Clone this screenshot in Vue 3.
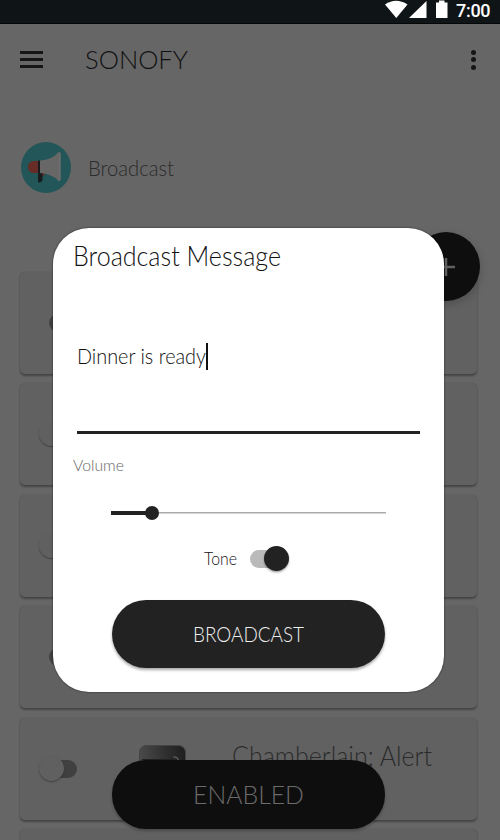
<script setup>
import { h, ref } from 'vue'

const message = ref('Dinner is ready')
const volume = ref(15)
const tone = ref(true)

const devices = [
  { on: true },
  { on: false },
  { on: false },
  { on: true },
  { on: false, name: 'Chamberlain: Alert' },
  { on: false },
]

// A single line of text fitted to a fixed advance width.
const FitText = (props) =>
  h('svg', { width: props.width, height: props.size * 1.3, style: { display: 'block', overflow: 'visible', flex: 'none' } }, [
    h('text', {
      x: 0,
      y: props.size,
      'font-size': props.size,
      fill: 'currentColor',
      textLength: props.width,
      lengthAdjust: 'spacingAndGlyphs',
    }, props.text),
  ])
FitText.props = ['text', 'width', 'size']
</script>

<template>
  <div class="screen">
    <div class="status">
      <svg class="signals" width="70" height="20" viewBox="0 0 70 20">
        <path d="M0 4.500Q11 -3 22.500 4.500L11.300 18z" />
        <path d="M41.500 1V18H24z" />
        <path d="M51 2.500H54V0.500H59.500V2.500H62.500V18H51z" />
      </svg>
      <span class="clock">7:00</span>
    </div>

    <header class="bar">
      <div class="menu"><i></i><i></i><i></i></div>
      <FitText class="brand" text="SONOFY" :width="103" :size="26" />
      <div class="more"><i></i><i></i><i></i></div>
    </header>

    <section class="broadcast">
      <svg width="50" height="51" viewBox="0 0 50 51">
        <ellipse cx="25" cy="25.500" rx="25" ry="25.500" fill="#225658" />
        <path d="M19 19H13Q7 19.500 7 25Q7 30.500 13 31H19z" fill="#672c25" />
        <path d="M19 31H23.500V33L20 35.500z" fill="#672c25" />
        <path d="M17 18.500H19.500V31H21.500V38.500Q19 41.500 17 40V31z" fill="#191c1d" />
        <path d="M19 18.500Q31 18 37 10.500Q39.500 9 39.500 12V37Q39.500 40 37 38.500Q31 32 19 31z" fill="#676767" />
        <path d="M38 11V38.500Q39.500 39.500 39.500 37V12Q39.500 9.500 38 11z" fill="#6e6e6e" />
      </svg>
      <FitText class="heading" text="Broadcast" :width="86" :size="22" />
    </section>

    <main class="cards">
      <article v-for="(device, i) in devices" :key="i" class="card">
        <div class="switch dim" :class="{ on: device.on }"><b></b></div>
        <template v-if="device.name">
          <svg class="device" width="47" height="46" viewBox="0 0 47 46">
            <defs>
              <linearGradient id="shell" x1="0" y1="0.200" x2="1" y2="0">
                <stop offset="0" stop-color="#4a4a4a" />
                <stop offset="0.550" stop-color="#303030" />
                <stop offset="1" stop-color="#1d1d1d" />
              </linearGradient>
            </defs>
            <rect x="0.500" y="0.500" width="46" height="45" rx="7" fill="url(#shell)" stroke="#444" />
            <path d="M3 14.500H36" stroke="#222" />
            <path d="M34.500 12Q39 11.500 39.500 16" fill="none" stroke="#777" />
          </svg>
          <FitText class="name" :text="device.name" :width="200" :size="28" />
        </template>
      </article>
    </main>

    <div class="fab"><svg width="18" height="18"><path d="M9 0V18M0 9H18" /></svg></div>
    <div class="pill enabled"><FitText text="ENABLED" :width="111" :size="25.500" /></div>

    <div class="dialog">
      <FitText class="title" text="Broadcast Message" :width="208" :size="27" />
      <div class="field">
        <FitText :text="message" :width="129" :size="22" />
        <span class="caret"></span>
      </div>
      <FitText class="caption" text="Volume" :width="51" :size="16.500" />
      <div class="slider">
        <div class="fill" :style="{ width: volume + '%' }"></div>
        <div class="knob"></div>
      </div>
      <div class="tone">
        <FitText class="tone-label" text="Tone" :width="33" :size="17" />
        <div class="switch" :class="{ on: tone }"><b></b></div>
      </div>
      <button class="pill send"><FitText text="BROADCAST" :width="111" :size="21" /></button>
    </div>
  </div>
</template>

<style>
body {
  margin: 0;
}
</style>

<style scoped>
.screen {
  position: relative;
  width: 500px;
  height: 840px;
  overflow: hidden;
  box-sizing: border-box;
  background: #666;
  color: #111;
  font-family: Lato, "Open Sans", sans-serif;
  font-weight: 300;
}
.status {
  display: flex;
  height: 24px;
  box-sizing: border-box;
  background: #0f1517;
  border-bottom: 1px solid #050606;
  padding-left: 385px;
}
.signals {
  fill: #fff;
  flex: none;
}
.clock {
  font: 500 18px/22px Roboto, sans-serif;
  color: #fff;
  margin-left: 1px;
  letter-spacing: -0.300px;
}
.bar {
  display: flex;
  align-items: center;
  height: 71px;
  padding: 0 24px 0 20px;
}
.menu {
  display: flex;
  flex-direction: column;
  gap: 4.500px;
  width: 23px;
  margin-right: 42px;
}
.menu i {
  height: 2.500px;
  background: #161616;
}
.brand {
  margin-top: 1px;
}
.more {
  display: flex;
  flex-direction: column;
  gap: 2.500px;
  margin-left: auto;
}
.more i {
  width: 5px;
  height: 5px;
  border-radius: 50%;
  background: #151515;
}
.broadcast {
  display: flex;
  align-items: center;
  gap: 17px;
  height: 51px;
  padding: 47px 0 0 21px;
  color: #2b2b2b;
}
.heading {
  margin-top: 1px;
}
.cards {
  display: flex;
  flex-direction: column;
  gap: 9.600px;
  padding: 78.500px 23px 0 20px;
}
.card {
  display: flex;
  box-sizing: border-box;
  height: 102px;
  flex: none;
  padding: 38px 0 0 19px;
  border-radius: 5px;
  background: #616161;
  box-shadow: 0 1.500px 2px rgba(0, 0, 0, 0.32), 0 0 1px rgba(0, 0, 0, 0.15);
  color: #2b2b2b;
}
.switch {
  position: relative;
  box-sizing: border-box;
  width: 38px;
  height: 25px;
  flex: none;
}
.switch::before {
  content: "";
  position: absolute;
  inset: 4px 0 3px 10px;
  border-radius: 9px;
  background: #bababa;
}
.switch b {
  position: absolute;
  left: 0;
  top: 0;
  width: 25px;
  height: 25px;
  border-radius: 50%;
  background: #222;
  box-shadow: 0 1.500px 2px rgba(0, 0, 0, 0.35);
}
.switch.on b {
  left: 24px;
}
.dim::before {
  background: #404040;
}
.dim b {
  background: #606060;
  box-shadow: 0 1px 1.500px rgba(0, 0, 0, 0.35);
}
.device {
  margin: -11px 0 0 62px;
  flex: none;
}
.name {
  margin: -18px 0 0 46px;
}
.fab {
  position: absolute;
  left: 412px;
  top: 232px;
  width: 68px;
  height: 69px;
  display: flex;
  align-items: center;
  justify-content: center;
  border-radius: 50%;
  background: #0e0e0e;
  box-shadow: 0 3px 8px rgba(0, 0, 0, 0.2);
}
.fab path {
  stroke: #606060;
  stroke-width: 2.500px;
}
.pill {
  display: flex;
  align-items: center;
  justify-content: center;
  box-sizing: border-box;
  width: 273px;
  height: 68px;
  border: 0;
  padding: 0;
  border-radius: 34px;
  font: inherit;
  font-weight: 300;
}
.enabled {
  position: absolute;
  left: 112px;
  top: 760px;
  height: 69px;
  background: #0e0e0e;
  color: #6b6b6b;
  padding-top: 1px;
  box-shadow: 0 2px 3px rgba(0, 0, 0, 0.25);
}
.dialog {
  position: absolute;
  left: 53px;
  top: 228px;
  width: 391px;
  height: 463.500px;
  box-sizing: border-box;
  display: flex;
  flex-direction: column;
  padding: 11px 24px 0 20px;
  border-radius: 36px;
  background: #fff;
  box-shadow: 0 0 2px rgba(0, 0, 0, 0.7);
}
.field {
  display: flex;
  align-items: center;
  box-sizing: border-box;
  height: 90px;
  margin: 70px 0 0 4px;
  padding-bottom: 62px;
  border-bottom: 3px solid #222;
}
.caret {
  width: 2px;
  height: 27px;
  background: #111;
}
.caption {
  color: #666;
  margin-top: 20px;
}
.slider {
  display: flex;
  align-items: center;
  width: 275px;
  height: 14px;
  margin: 30px 0 0 38px;
  background: linear-gradient(#aaa, #aaa) center / 100% 1.500px no-repeat;
}
.fill {
  height: 4px;
  background: #222;
}
.knob {
  width: 14px;
  height: 14px;
  margin-left: -7px;
  flex: none;
  border-radius: 50%;
  background: #222;
}
.tone {
  display: flex;
  align-items: center;
  gap: 3px;
  height: 25px;
  margin: 26px 0 0 131px;
}
.tone-label {
  margin-top: 2px;
}
.send {
  background: #222;
  color: #eee;
  margin: 29px 0 0 39px;
  padding-top: 2px;
  flex: none;
  box-shadow: 0 2px 3px rgba(0, 0, 0, 0.35);
}
</style>
